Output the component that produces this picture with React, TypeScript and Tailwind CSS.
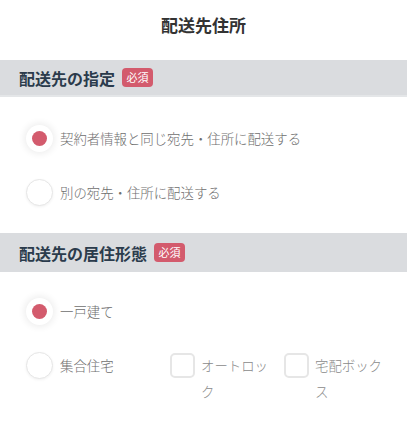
import React from "react";

const FONT = { fontFamily: '"Noto Sans CJK JP", "Noto Sans", sans-serif' };

function Badge() {
  return (
    <span className="ml-[7px] inline-flex h-[19px] w-[31px] items-center justify-center rounded-[4px] bg-[#d35b6d] text-[11px] leading-none text-white">
      必須
    </span>
  );
}

function SectionHeader({ title, border }: { title: string; border?: boolean }) {
  return (
    <div
      className={`flex items-center bg-[#dadcdf] pl-[19px] ${
        border ? "h-[37px] border-b-[2px] border-[#e4e6e8]" : "h-[39px]"
      }`}
    >
      <span className="text-[16px] font-bold leading-none text-[#2b3b4c]">{title}</span>
      <Badge />
    </div>
  );
}

function Radio({ checked, label }: { checked?: boolean; label: string }) {
  return (
    <div className="flex items-start">
      <div
        className={`flex h-[27px] w-[27px] shrink-0 items-center justify-center rounded-full bg-white ${
          checked
            ? "shadow-[0_0_7px_2px_rgba(0,0,0,0.07)]"
            : "border border-[#e6e6e6] shadow-[0_1px_3px_rgba(0,0,0,0.06)]"
        }`}
      >
        {checked && <div className="h-[15px] w-[15px] rounded-full bg-[#d35b6d]" />}
      </div>
      <span className="ml-[7px] text-[13.4px] font-light leading-[27px] text-[#6e6e6e]">{label}</span>
    </div>
  );
}

function Check({ label, width }: { label: string; width: string }) {
  return (
    <div className="flex items-start">
      <div className="h-[25px] w-[25px] shrink-0 rounded-[5px] border-2 border-[#e6e6e6] bg-white" />
      <span className={`ml-[6px] -mt-[1px] text-[13.4px] font-light leading-[26px] text-[#8a8a8a] ${width}`}>
        {label}
      </span>
    </div>
  );
}

export default function App() {
  return (
    <div className="h-[435px] w-[407px] overflow-hidden bg-white" style={FONT}>
      <div className="flex h-[60px] items-center justify-center pb-[10px]">
        <h1 className="text-[17px] font-bold text-[#333]">配送先住所</h1>
      </div>
      <SectionHeader title="配送先の指定" border />
      <div className="flex flex-col gap-[27px] pb-[27px] pl-[26px] pt-[28px]">
        <Radio checked label="契約者情報と同じ宛先・住所に配送する" />
        <Radio label="別の宛先・住所に配送する" />
      </div>
      <SectionHeader title="配送先の居住形態" />
      <div className="flex flex-col gap-[27px] pl-[26px] pt-[26px]">
        <Radio checked label="一戸建て" />
        <div className="flex items-start">
          <div className="w-[144px]">
            <Radio label="集合住宅" />
          </div>
          <div className="w-[114px] pt-[1px]">
            <Check label="オートロック" width="w-[72px]" />
          </div>
          <div className="pt-[1px]">
            <Check label="宅配ボックス" width="w-[72px]" />
          </div>
        </div>
      </div>
    </div>
  );
}
